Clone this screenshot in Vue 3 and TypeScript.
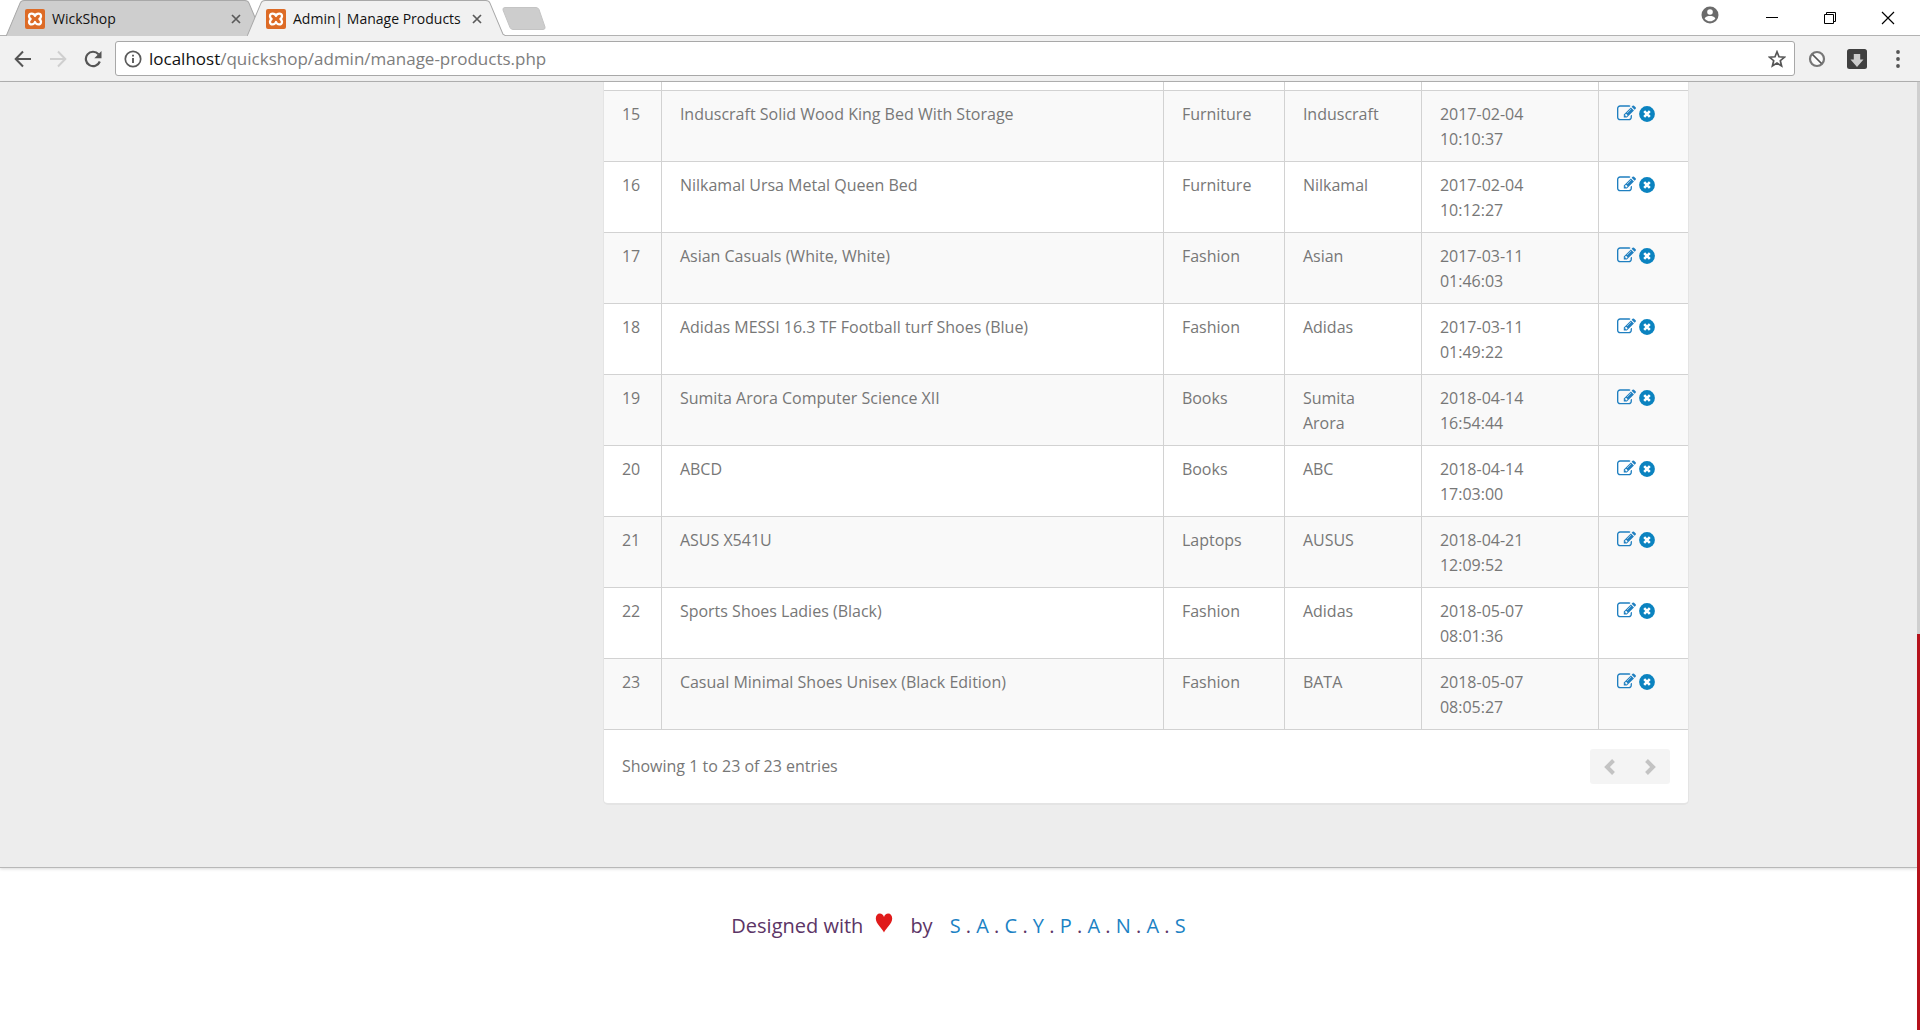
<script setup lang="ts">
interface Product {
  id: number
  name: string
  category: string
  company: string
  date: string
  time: string
}

const products: Product[] = [
  { id: 15, name: 'Induscraft Solid Wood King Bed With Storage', category: 'Furniture', company: 'Induscraft', date: '2017-02-04', time: '10:10:37' },
  { id: 16, name: 'Nilkamal Ursa Metal Queen Bed', category: 'Furniture', company: 'Nilkamal', date: '2017-02-04', time: '10:12:27' },
  { id: 17, name: 'Asian Casuals (White, White)', category: 'Fashion', company: 'Asian', date: '2017-03-11', time: '01:46:03' },
  { id: 18, name: 'Adidas MESSI 16.3 TF Football turf Shoes (Blue)', category: 'Fashion', company: 'Adidas', date: '2017-03-11', time: '01:49:22' },
  { id: 19, name: 'Sumita Arora Computer Science XII', category: 'Books', company: 'Sumita Arora', date: '2018-04-14', time: '16:54:44' },
  { id: 20, name: 'ABCD', category: 'Books', company: 'ABC', date: '2018-04-14', time: '17:03:00' },
  { id: 21, name: 'ASUS X541U', category: 'Laptops', company: 'AUSUS', date: '2018-04-21', time: '12:09:52' },
  { id: 22, name: 'Sports Shoes Ladies (Black)', category: 'Fashion', company: 'Adidas', date: '2018-05-07', time: '08:01:36' },
  { id: 23, name: 'Casual Minimal Shoes Unisex (Black Edition)', category: 'Fashion', company: 'BATA', date: '2018-05-07', time: '08:05:27' },
]

const tabs = [
  { title: 'WickShop', active: false },
  { title: 'Admin| Manage Products', active: true },
]

const letters = 'SACYPANAS'.split('')
</script>

<template>
  <div class="window">
    <header class="chrome">
      <div class="tabstrip">
        <div v-for="tab in tabs" :key="tab.title" class="tab" :class="{ active: tab.active }">
          <svg class="tab-shape" viewBox="0 0 257 38" preserveAspectRatio="none" aria-hidden="true">
            <path d="M0 38 L1 36 L14 3 Q15 0.5 18 0.5 H237 Q240 0.5 241 3 L254 36 L257 38 Z" />
            <path class="edge" d="M0 38 L1 36 L14 3 Q15 0.5 18 0.5 H237 Q240 0.5 241 3 L254 36 L257 38" />
          </svg>
          <svg class="favicon" viewBox="0 0 20 20" aria-hidden="true">
            <rect width="20" height="20" rx="2" fill="#dd6b26" />
            <path d="M10 7C9 4 4 3.500 4 7.200c0 1.400.7 2.100 1.600 2.800C4.700 10.700 4 11.400 4 12.800 4 16.500 9 16 10 13c1 3 6 3.500 6-.2 0-1.400-.7-2.100-1.600-2.800.9-.7 1.600-1.400 1.600-2.800C16 3.500 11 4 10 7z" fill="none" stroke="#fff" stroke-width="2.300" stroke-linejoin="round" />
          </svg>
          <span class="tab-title">{{ tab.title }}</span>
          <button class="tab-close" type="button" :aria-label="'Close ' + tab.title">
            <svg viewBox="0 0 10 10" width="10" height="10"><path d="M1 1 9 9M9 1 1 9" stroke="#5a5a5a" stroke-width="1.700" /></svg>
          </button>
        </div>
        <button class="new-tab" type="button" aria-label="New tab">
          <svg viewBox="0 0 44 23" width="44" height="23"><path d="M3 .5H34q2 0 3 2L43 20q.5 2.500-2 2.500H11q-2 0-3-2L1 3Q.5.500 3 .5z" fill="#cdcdcd" stroke="#c4c4c4" stroke-width="1" /></svg>
        </button>
        <div class="window-buttons">
          <button type="button" class="profile" aria-label="Profile">
            <svg viewBox="0 0 18 18" width="18" height="18"><circle cx="9" cy="9" r="8.500" fill="#6b6b6b" /><circle cx="9" cy="6" r="2.800" fill="#fff" /><path d="M3.600 12.500C4.500 10.300 7 9.900 9 9.900s4.500.4 5.400 2.600C13 14.400 11 15.300 9 15.300s-4-.9-5.400-2.800z" fill="#fff" /></svg>
          </button>
          <button type="button" aria-label="Minimize">
            <svg viewBox="0 0 14 14" width="14" height="14"><path d="M1 6.500h12" stroke="#000" /></svg>
          </button>
          <button type="button" aria-label="Restore">
            <svg viewBox="0 0 14 14" width="14" height="14"><path d="M1.500 3.500h9v9h-9zM3.500 3.500v-2h9v9h-2" fill="none" stroke="#000" /></svg>
          </button>
          <button type="button" aria-label="Close window">
            <svg viewBox="0 0 14 14" width="14" height="14"><path d="M1 1 13 13M13 1 1 13" stroke="#000" stroke-width="1.200" /></svg>
          </button>
        </div>
      </div>

      <div class="toolbar">
        <div class="nav">
          <button type="button" aria-label="Back">
            <svg viewBox="0 0 18 18" width="18" height="18"><path d="M17 9H2M9 1.500 1.700 9 9 16.500" fill="none" stroke="#555" stroke-width="2" /></svg>
          </button>
          <button type="button" aria-label="Forward" disabled>
            <svg viewBox="0 0 18 18" width="18" height="18"><path d="M1 9H16M9 1.500 16.300 9 9 16.500" fill="none" stroke="#cfcfcf" stroke-width="2" /></svg>
          </button>
          <button type="button" aria-label="Reload">
            <svg viewBox="0 0 18 18" width="18" height="18"><path d="M15.800 11.500A7.200 7.200 0 1 1 14.500 4.200" fill="none" stroke="#555" stroke-width="2.200" /><path d="M17.500 1v7.200h-7.200z" fill="#555" /></svg>
          </button>
        </div>
        <div class="address">
          <svg viewBox="0 0 18 18" width="18" height="18" aria-hidden="true"><circle cx="9" cy="9" r="7.700" fill="none" stroke="#5a5a5a" stroke-width="1.700" /><path d="M9 8v5M9 4.700v1.900" stroke="#5a5a5a" stroke-width="1.900" /></svg>
          <a class="url" href="#">localhost<span>/quickshop/admin/manage-products.php</span></a>
          <button type="button" aria-label="Bookmark">
            <svg viewBox="0 0 18 18" width="18" height="18"><path d="M9 1.800 11 6.800 16.500 7.200 12.300 10.700 13.600 16 9 13.100 4.400 16 5.700 10.700 1.500 7.200 7 6.800z" fill="none" stroke="#555" stroke-width="1.700" /></svg>
          </button>
        </div>
        <div class="extensions">
          <button type="button" aria-label="Blocker">
            <svg viewBox="0 0 18 18" width="18" height="18"><circle cx="9" cy="9" r="7" fill="#fafafa" stroke="#777" stroke-width="2.200" /><path d="M4.500 4.500l9 9" stroke="#555" stroke-width="1.700" /></svg>
          </button>
          <button type="button" aria-label="Downloads">
            <svg viewBox="0 0 20 20" width="20" height="20"><rect width="20" height="20" rx="2.500" fill="#404040" /><path d="M6.800 5h6.400v5.500h3.300L10 18 3.500 10.500h3.300z" fill="#ccc" /></svg>
          </button>
          <button type="button" aria-label="Menu">
            <svg viewBox="0 0 20 18" width="20" height="18"><g fill="#555"><circle cx="10" cy="2" r="1.900" /><circle cx="10" cy="9" r="1.900" /><circle cx="10" cy="16" r="1.900" /></g></svg>
          </button>
        </div>
      </div>
    </header>

    <div class="viewport">
      <div class="page">
        <main class="content">
          <section class="card">
            <table>
              <colgroup>
                <col class="c-id" /><col class="c-name" /><col class="c-category" /><col class="c-company" /><col class="c-date" /><col class="c-action" />
              </colgroup>
              <tbody>
                <tr class="cut"><td></td><td></td><td></td><td></td><td></td><td></td></tr>
                <tr v-for="p in products" :key="p.id" :class="{ odd: p.id % 2 === 1 }">
                  <td>{{ p.id }}</td>
                  <td>{{ p.name }}</td>
                  <td>{{ p.category }}</td>
                  <td class="company">{{ p.company }}</td>
                  <td>{{ p.date }}<br />{{ p.time }}</td>
                  <td>
                    <div class="actions">
                      <a href="#" :aria-label="'Edit ' + p.name">
                        <svg viewBox="0 0 1792 1792" width="19" height="19"><path fill="#1f7fc0" d="M888 1184l116-116-152-152-116 116v56h96v96h56zm440-720q-16-16-33 1l-350 350q-17 17-1 33t33-1l350-350q17-17 1-33zm80 594v190q0 119-84.500 203.500t-203.500 84.500h-832q-119 0-203.500-84.500t-84.500-203.500v-832q0-119 84.500-203.500t203.500-84.500h832q63 0 117 25 15 7 18 23 3 17-9 29l-49 49q-14 14-32 8-23-6-45-6h-832q-66 0-113 47t-47 113v832q0 66 47 113t113 47h832q66 0 113-47t47-113v-126q0-13 9-22l64-64q15-15 35-7t20 29zm-96-738l288 288-672 672h-288v-288zm444 132l-92 92-288-288 92-92q28-28 68-28t68 28l152 152q28 28 28 68t-28 68z" /></svg>
                      </a>
                      <a href="#" :aria-label="'Delete ' + p.name">
                        <svg viewBox="0 0 16 16" width="16" height="16"><circle cx="8" cy="8" r="7.900" fill="#0b83c0" /><path d="M5.200 5.200l5.600 5.600M10.800 5.200l-5.600 5.600" stroke="#fff" stroke-width="2.600" /></svg>
                      </a>
                    </div>
                  </td>
                </tr>
              </tbody>
            </table>
            <div class="table-footer">
              <span>Showing 1 to 23 of 23 entries</span>
              <div class="pager">
                <button type="button" aria-label="Previous page">
                  <svg viewBox="0 0 12 18" width="12" height="18"><path d="M9.500 2.500 3 9l6.500 6.500" fill="none" stroke="#c3c3c3" stroke-width="4" /></svg>
                </button>
                <button type="button" aria-label="Next page">
                  <svg viewBox="0 0 12 18" width="12" height="18"><path d="M2.500 2.500 9 9l-6.500 6.500" fill="none" stroke="#c3c3c3" stroke-width="4" /></svg>
                </button>
              </div>
            </div>
          </section>
        </main>
        <footer class="site-footer">
          <span>Designed with</span>
          <svg viewBox="0 0 18 22" width="18" height="22" aria-label="love"><path d="M9 19.500C7.500 15.500.8 11 .8 5.500.8 2.500 2.500.500 4.800.500 6.800.5 8.400 2 9 4 9.600 2 11.200.5 13.200.5c2.300 0 4 2 4 5 0 5.500-6.700 10-8.200 14z" fill="#e01b1b" /></svg>
          <span>by</span>
          <span class="author"><template v-for="(l, i) in letters" :key="i"><template v-if="i > 0"> . </template><a href="#">{{ l }}</a></template></span>
        </footer>
      </div>
      <div class="scroll-rail"><div class="scroll-thumb"></div></div>
    </div>
  </div>
</template>

<style>
body {
  margin: 0;
  background: #fff;
}
</style>

<style scoped>
* {
  box-sizing: border-box;
}
button {
  display: flex;
  align-items: center;
  justify-content: center;
  padding: 0;
  border: 0;
  background: none;
}
svg {
  display: block;
  flex: none;
}
a {
  color: #1c82c4;
  text-decoration: none;
}
.window {
  display: flex;
  flex-direction: column;
  min-height: 100vh;
  font-family: "Open Sans", sans-serif;
}
.tabstrip {
  display: flex;
  height: 36px;
  padding-left: 6px;
  background: #fff;
  border-bottom: 1px solid #b2b2b2;
}
.tab {
  position: relative;
  z-index: 1;
  display: flex;
  align-items: center;
  width: 259px;
  height: 36px;
  margin-right: -18px;
  padding: 2px 24px 0 19px;
}
.tab.active {
  z-index: 2;
}
.tab-shape {
  position: absolute;
  inset: 0;
  width: 100%;
  height: 100%;
  fill: #cecece;
}
.tab.active .tab-shape {
  fill: #f1f1f1;
}
.tab-shape .edge {
  fill: none;
  stroke: #a8a8a8;
}
.favicon {
  position: relative;
  width: 20px;
  height: 20px;
}
.tab-title {
  position: relative;
  flex: 1;
  margin-left: 7px;
  font-size: 14px;
  line-height: 20px;
  color: #111;
  white-space: nowrap;
}
.tab-close {
  position: relative;
  width: 10px;
  height: 20px;
}
.new-tab {
  margin-left: 14px;
  padding-top: 2px;
}
.window-buttons {
  display: flex;
  align-items: center;
  gap: 44px;
  margin-left: auto;
  padding-right: 25px;
}
.profile {
  padding: 0 2px 5px 0;
}
.toolbar {
  display: flex;
  align-items: center;
  gap: 13px;
  height: 46px;
  padding: 0 12px 0 14px;
  background: #f1f1f1;
  border-bottom: 1px solid #b2b2b2;
}
.nav {
  display: flex;
  gap: 17px;
}
.address {
  display: flex;
  flex: 1;
  align-items: center;
  height: 35px;
  padding: 0 8px;
  background: #fff;
  border: 1px solid #a8a8a8;
  border-radius: 3px;
}
.url {
  flex: 1;
  margin-left: 7px;
  font-size: 17px;
  line-height: 24px;
  color: #111;
}
.url span {
  color: #7d7d7d;
}
.extensions {
  display: flex;
  align-items: center;
  gap: 21px;
}
.viewport {
  display: flex;
  flex: 1;
}
.page {
  display: flex;
  flex: 1;
  flex-direction: column;
  background: #fff;
}
.content {
  padding: 0 11.9% 62px 31.45%;
  background: #ededed;
  border-bottom: 1px solid #b8b8b8;
  box-shadow: 0 1px 3px rgba(0, 0, 0, 0.15);
}
.card {
  background: #fff;
  border: 1px solid #e4e4e4;
  border-top: 0;
  border-bottom-width: 2px;
  border-radius: 0 0 5px 5px;
  color: #777;
  font-size: 16px;
  line-height: 25px;
}
table {
  width: 100%;
  border-spacing: 0;
  table-layout: fixed;
}
.c-id { width: 58px; }
.c-category { width: 121px; }
.c-company { width: 137px; }
.c-date { width: 177px; }
.c-action { width: 89px; }
td {
  padding: 11px 18px 9px 18px;
  border-bottom: 1px solid #d2d2d2;
  border-right: 1px solid #d2d2d2;
  vertical-align: top;
}
td:last-child {
  border-right: 0;
}
.company {
  padding-right: 24px;
}
.cut td {
  height: 9px;
  padding: 0;
}
.odd td {
  background: #f9f9f9;
}
.actions {
  display: flex;
  gap: 3px;
  align-items: center;
  height: 23px;
}
.table-footer {
  display: flex;
  align-items: center;
  justify-content: space-between;
  padding: 19px 18px;
}
.pager {
  display: flex;
  background: #f4f4f4;
  border-radius: 3px;
}
.pager button {
  width: 40px;
  height: 35px;
}
.site-footer {
  display: flex;
  justify-content: center;
  align-items: center;
  padding: 41px 0;
  font-size: 20px;
  line-height: 34px;
  color: #5c3566;
}
.site-footer svg {
  margin: 0 17px 4px 12px;
}
.author {
  margin-left: 17px;
  white-space: pre;
}
.scroll-rail {
  display: flex;
  flex-direction: column;
  justify-content: flex-end;
  width: 3px;
  background: #cfcfcf;
}
.scroll-thumb {
  height: 41.8%;
  background: #b5121b;
}
</style>
